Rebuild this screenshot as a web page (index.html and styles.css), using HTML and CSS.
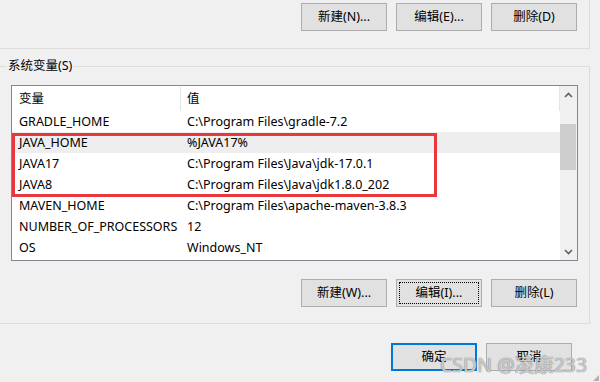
FILE: index.html
```html
<!DOCTYPE html>
<html lang="zh-CN">
<head>
<meta charset="utf-8">
<title>环境变量</title>
<link rel="stylesheet" href="styles.css">
</head>
<body>
<div class="dialog">
  <div class="user-group">
    <div class="btn-row top-row">
      <button class="btn">新建(N)...</button>
      <button class="btn">编辑(E)...</button>
      <button class="btn">删除(D)</button>
    </div>
  </div>

  <fieldset class="sys-group">
    <legend class="sys-legend">系统变量(S)</legend>
    <div class="listbox">
      <div class="list-main">
        <div class="list-head">
          <div class="hcell c1">变量</div>
          <div class="hcell c2">值</div>
        </div>
        <div class="row"><div class="cell c1">GRADLE_HOME</div><div class="cell c2">C:\Program Files\gradle-7.2</div></div>
        <div class="row hl"><div class="cell c1">JAVA_HOME</div><div class="cell c2">%JAVA17%</div></div>
        <div class="row"><div class="cell c1">JAVA17</div><div class="cell c2">C:\Program Files\Java\jdk-17.0.1</div></div>
        <div class="row"><div class="cell c1">JAVA8</div><div class="cell c2">C:\Program Files\Java\jdk1.8.0_202</div></div>
        <div class="row"><div class="cell c1">MAVEN_HOME</div><div class="cell c2">C:\Program Files\apache-maven-3.8.3</div></div>
        <div class="row"><div class="cell c1">NUMBER_OF_PROCESSORS</div><div class="cell c2">12</div></div>
        <div class="row"><div class="cell c1">OS</div><div class="cell c2">Windows_NT</div></div>
        <div class="redbox"></div>
      </div>
      <div class="vscroll">
        <div class="sb-arrow">
          <svg width="9" height="6" viewBox="0 0 9 6"><path d="M1 5 L4.5 1.5 L8 5" fill="none" stroke="#606060" stroke-width="1.6"/></svg>
        </div>
        <div class="sb-track">
          <div class="sb-thumb"></div>
        </div>
        <div class="sb-arrow">
          <svg width="9" height="6" viewBox="0 0 9 6"><path d="M1 1 L4.5 4.5 L8 1" fill="none" stroke="#606060" stroke-width="1.6"/></svg>
        </div>
      </div>
    </div>
    <div class="btn-row sys-row">
      <button class="btn">新建(W)...</button>
      <button class="btn focus">编辑(I)...</button>
      <button class="btn">删除(L)</button>
    </div>
  </fieldset>

  <div class="btn-row dlg-row">
    <button class="btn default">确定</button>
    <button class="btn">取消</button>
  </div>

  <div class="grip"></div>
  <div class="watermark">CSDN @凌康233</div>
</div>
</body>
</html>
```

FILE: styles.css
```css
html, body {
  margin: 0;
  padding: 0;
}
body {
  background: #f0f0f0;
  font-family: "Noto Sans", "Noto Sans CJK SC", sans-serif;
  font-size: 12.5px;
  color: #000;
}
.dialog {
  position: relative;
  width: 600px;
  height: 382px;
  overflow: hidden;
}
.user-group {
  width: 589px;
  height: 48px;
  border-right: 1px solid #dcdcdc;
  border-bottom: 1px solid #dcdcdc;
  box-sizing: content-box;
}
.btn-row {
  display: flex;
  justify-content: flex-end;
  gap: 9px;
}
.top-row {
  padding-top: 3px;
  padding-right: 12px;
}
.btn {
  width: 86px;
  height: 28px;
  margin: 0;
  padding: 0;
  background: #e1e1e1;
  border: 1px solid #adadad;
  font-family: "Noto Sans", "Noto Sans CJK SC", sans-serif;
  font-size: 12.5px;
  color: #000;
  line-height: 24px;
}
.btn.focus {
  outline: 1px dotted #000;
  outline-offset: -4px;
}
.btn.default {
  border: 2px solid #0078d7;
  width: 86px;
}
.sys-group {
  margin: 10px 0 0 0;
  padding: 0 0 16px 0;
  width: 589px;
  border: none;
  border-top: 1px solid #dcdcdc;
  border-right: 1px solid #dcdcdc;
  border-bottom: 1px solid #dcdcdc;
  min-width: 0;
}
.sys-legend {
  margin-left: 6px;
  padding: 0 2px;
  line-height: 14px;
  font-size: 12.5px;
}
.listbox {
  margin: 12px 0 0 11px;
  width: 565px;
  height: 174px;
  border: 1px solid #828790;
  background: #fff;
  display: flex;
}
.list-main {
  position: relative;
  width: 548px;
}
.list-head {
  display: flex;
  height: 25px;
}
.hcell {
  line-height: 25px;
  box-sizing: border-box;
}
.hcell.c1 {
  width: 169px;
  padding-left: 7px;
  border-right: 1px solid #e5e5e5;
  margin: 1px 0 0 0;
  line-height: 24px;
}
.hcell.c2 {
  flex: 1;
  padding-left: 6px;
  border-right: 1px solid #e5e5e5;
}
.row {
  display: flex;
  height: 21px;
  line-height: 21px;
}
.row.hl {
  background: #eeeeee;
}
.cell {
  box-sizing: border-box;
  white-space: nowrap;
}
.cell.c1 {
  width: 169px;
  padding-left: 7px;
}
.cell.c2 {
  padding-left: 6px;
}
.redbox {
  position: absolute;
  left: 0;
  top: 47px;
  width: 419px;
  height: 58px;
  border: 3px solid #e8383d;
}
.vscroll {
  width: 17px;
  background: #f0f0f0;
  display: flex;
  flex-direction: column;
}
.sb-arrow {
  height: 17px;
  display: flex;
  align-items: center;
  justify-content: center;
}
.sb-track {
  flex: 1;
  position: relative;
}
.sb-thumb {
  margin: 21px 1px 0 0;
  height: 46px;
  background: #cdcdcd;
}
.sys-row {
  margin-top: 18px;
  padding-right: 12px;
}
.dlg-row {
  margin-top: 19px;
  padding-right: 28px;
}
.grip {
  position: absolute;
  right: 1px;
  bottom: 1px;
  width: 6px;
  height: 6px;
  background: radial-gradient(circle, #b0b0b0 0.7px, transparent 1px) 0 0 / 2px 2px;
  clip-path: polygon(100% 0, 100% 100%, 0 100%);
}
.watermark {
  position: absolute;
  left: 440px;
  top: 349px;
  font-family: "Noto Sans", "Noto Sans CJK SC", sans-serif;
  font-size: 19.5px;
  color: rgba(230, 230, 230, 0.75);
  text-shadow: 0 0 1px rgba(110, 110, 110, 0.9), 0 0 1px rgba(140, 140, 140, 0.8);
  white-space: nowrap;
}
```
